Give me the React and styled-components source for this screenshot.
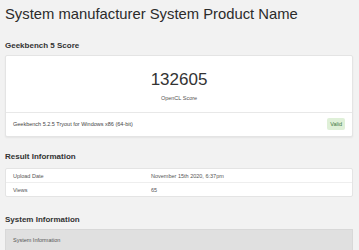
import React from "react";
import styled, { createGlobalStyle } from "styled-components";

const Global = createGlobalStyle`
  html, body { margin: 0; padding: 0; background: #f2f2f2; }
  body { font-family: "Liberation Sans", Arial, sans-serif; color: #333; }
`;

const Page = styled.div`
  padding: 3px 6px 0 5px;
  width: 359px;
  box-sizing: border-box;
`;

const Title = styled.h1`
  margin: 0;
  font-size: 14.8px;
  font-weight: 400;
  line-height: 22px;
  color: #2b2b2b;
`;

const SectionHead = styled.h3`
  margin: ${(p) => p.$mt}px 0 ${(p) => p.$mb}px 0;
  font-size: 8px;
  font-weight: 700;
  line-height: 11px;
  color: #333;
`;

const Card = styled.div`
  background: #fff;
  border: 1px solid #e4e4e4;
  border-radius: 2px;
  box-shadow: 0 1px 2px rgba(0, 0, 0, 0.06);
`;

const ScoreBody = styled.div`
  display: flex;
  flex-direction: column;
  align-items: center;
  padding: 14px 0 10px;
  border-bottom: 1px solid #e8e8e8;
`;

const Score = styled.div`
  font-size: 17px;
  line-height: 20px;
  color: #333;
`;

const ScoreLabel = styled.div`
  font-size: 5.5px;
  line-height: 8px;
  margin-top: 4px;
  color: #555;
`;

const Footer = styled.div`
  display: flex;
  align-items: center;
  justify-content: space-between;
  padding: 5px 7px 6px 7px;
  font-size: 5.5px;
  color: #444;
`;

const Badge = styled.span`
  background: #dff0d8;
  color: #3c763d;
  font-size: 5.5px;
  padding: 3px 3px;
  border-radius: 2px;
`;

const Table = styled.div`
  background: #fff;
  border: 1px solid #e4e4e4;
  border-radius: 2px;
`;

const Row = styled.div`
  display: grid;
  grid-template-columns: 138px 1fr;
  padding: 0 7px;
  height: 13px;
  align-items: center;
  font-size: 5.5px;
  color: #555;
  & + & { border-top: 1px solid #eee; }
`;

const Header = styled.div`
  background: #e0e0e0;
  border: 1px solid #d8d8d8;
  border-bottom: none;
  height: 20px;
  display: flex;
  align-items: center;
  padding: 0 7px;
  font-size: 5.5px;
  color: #555;
`;

export default function App() {
  return (
    <>
      <Global />
      <Page>
        <Title>System manufacturer System Product Name</Title>
        <SectionHead $mt={15} $mb={4}>Geekbench 5 Score</SectionHead>
        <Card>
          <ScoreBody>
            <Score>132605</Score>
            <ScoreLabel>OpenCL Score</ScoreLabel>
          </ScoreBody>
          <Footer>
            <span>Geekbench 5.2.5 Tryout for Windows x86 (64-bit)</span>
            <Badge>Valid</Badge>
          </Footer>
        </Card>
        <SectionHead $mt={14} $mb={6}>Result Information</SectionHead>
        <Table>
          <Row>
            <span>Upload Date</span>
            <span>November 15th 2020, 6:37pm</span>
          </Row>
          <Row>
            <span>Views</span>
            <span>65</span>
          </Row>
        </Table>
        <SectionHead $mt={17} $mb={4}>System Information</SectionHead>
        <Header>System Information</Header>
      </Page>
    </>
  );
}
